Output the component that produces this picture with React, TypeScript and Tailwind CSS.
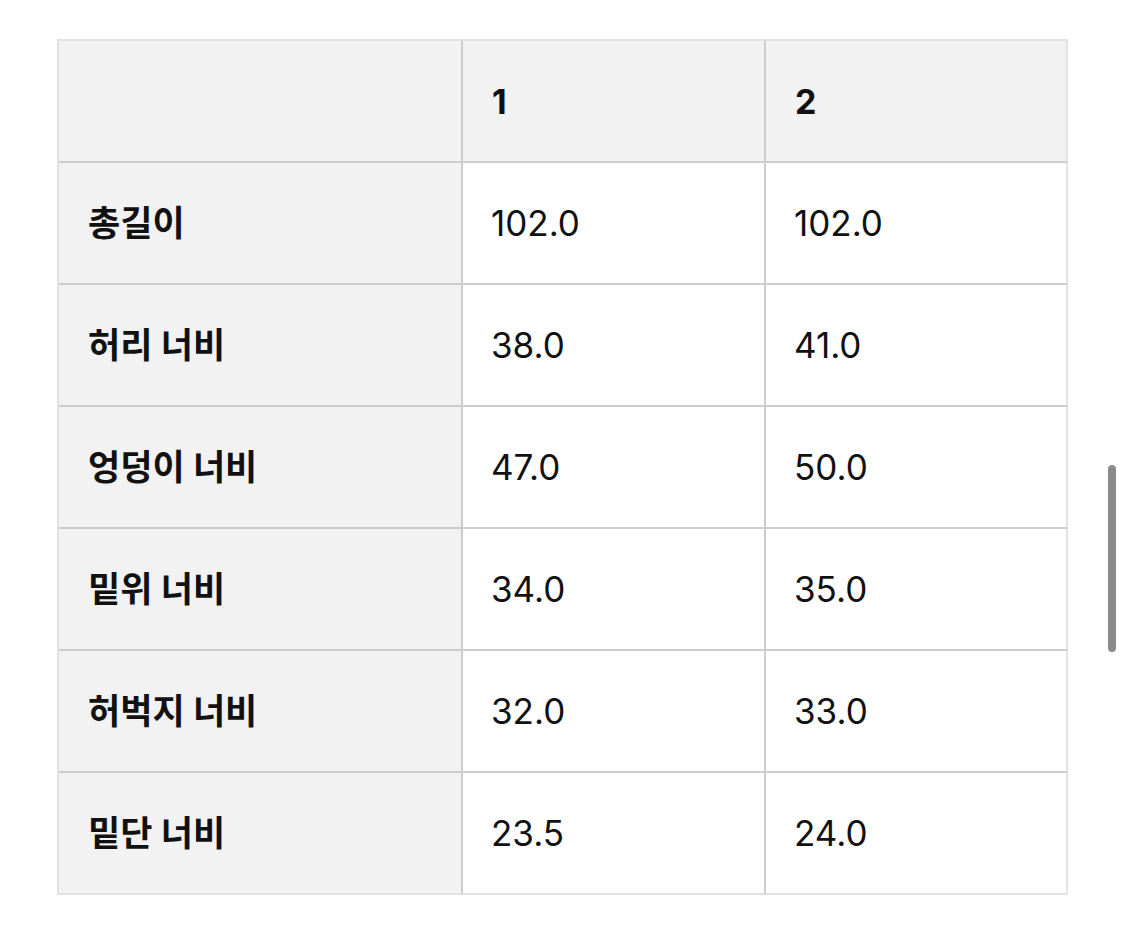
import React from "react";

const rows: Array<[string, string, string]> = [
  ["총길이", "102.0", "102.0"],
  ["허리 너비", "38.0", "41.0"],
  ["엉덩이 너비", "47.0", "50.0"],
  ["밑위 너비", "34.0", "35.0"],
  ["허벅지 너비", "32.0", "33.0"],
  ["밑단 너비", "23.5", "24.0"],
];

export default function App() {
  const font = { fontFamily: '"Inter", "Noto Sans CJK KR", sans-serif' };
  return (
    <main
      className="relative w-[1125px] h-[927px] bg-white text-[#111] pl-[57px] pt-[39px]"
      style={font}
    >
      <div className="w-[1011px] border-l-2 border-t-2 border-[#e2e2e2]">
        {/* header */}
        <div className="grid grid-cols-[404px_303px_302px] h-[122px]">
          <div className="bg-[#f2f2f2] border-r-2 border-b-2 border-[#cdcdcd]" />
          <div className="bg-[#f2f2f2] border-r-2 border-b-2 border-[#cdcdcd] flex items-center pl-[29px] text-[34px] font-bold">
            1
          </div>
          <div className="bg-[#f2f2f2] border-r-2 border-b-2 border-[#cdcdcd] border-r-[#e2e2e2] flex items-center pl-[29px] text-[34px] font-bold">
            2
          </div>
        </div>
        {rows.map((row, i) => {
          const last = i === rows.length - 1;
          const bottom = last ? "border-b-[#e2e2e2]" : "";
          return (
            <div key={i} className="grid grid-cols-[404px_303px_302px] h-[122px]">
              <div
                className={`bg-[#f2f2f2] border-r-2 border-b-2 border-[#cdcdcd] ${bottom} flex items-center pl-[29px] text-[35px] font-bold`}
              >
                {row[0]}
              </div>
              <div
                className={`bg-white border-r-2 border-b-2 border-[#cdcdcd] ${bottom} flex items-center pl-[28px] text-[35px]`}
              >
                {row[1]}
              </div>
              <div
                className={`bg-white border-r-2 border-b-2 border-[#cdcdcd] border-r-[#e2e2e2] ${bottom} flex items-center pl-[28px] text-[35px]`}
              >
                {row[2]}
              </div>
            </div>
          );
        })}
      </div>
      {/* overlay scrollbar */}
      <div className="absolute left-[1108px] top-[465px] w-[8px] h-[187px] rounded-full bg-[#8c8c8c]" />
    </main>
  );
}
